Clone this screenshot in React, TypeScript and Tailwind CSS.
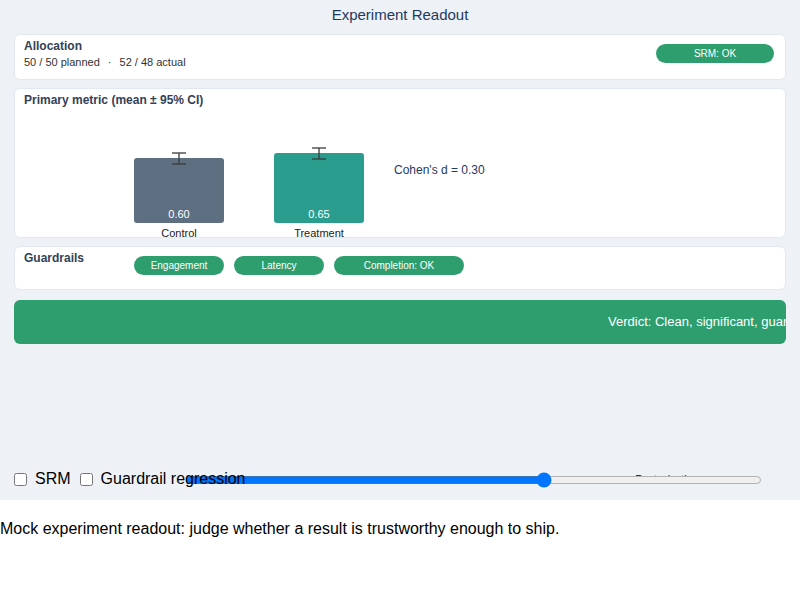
import React from "react";

const font = { fontFamily: '"Liberation Sans", Arial, Helvetica, sans-serif' };

function Pill({ children, w }: { children: React.ReactNode; w: string }) {
  return (
    <div className={`${w} h-[19px] rounded-full bg-[#2e9e6f] text-white text-[10px] flex items-center justify-center`}>
      {children}
    </div>
  );
}

function ErrorBar() {
  return (
    <svg width="16" height="13" viewBox="0 0 16 13" className="block">
      <line x1="1" y1="1" x2="15" y2="1" stroke="#3a3a3a" strokeWidth="1.3" />
      <line x1="8" y1="1" x2="8" y2="12" stroke="#3a3a3a" strokeWidth="1.3" />
      <line x1="1" y1="12" x2="15" y2="12" stroke="#3a3a3a" strokeWidth="1.3" />
    </svg>
  );
}

function Bar({ label, value, h, color }: { label: string; value: string; h: string; color: string }) {
  return (
    <div className="w-[90px] flex flex-col items-center">
      <div className="-mb-[7px] relative z-10">
        <ErrorBar />
      </div>
      <div className={`w-[90px] ${h} ${color} rounded-[3px] flex items-end justify-center pb-[2px]`}>
        <span className="text-white text-[11px] leading-[13px]">{value}</span>
      </div>
      <div className="text-[11px] leading-[13px] text-[#222] mt-[4px]">{label}</div>
    </div>
  );
}

export default function App() {
  return (
    <div style={font}>
      <div className="relative h-[500px] bg-[#eef2f6] px-[14px] pt-[6px]">
        <div className="text-center text-[15px] leading-[18px] text-[#1e3a5f]">Experiment Readout</div>

        <div className="mt-[10px] h-[46px] bg-white border border-[#e2e8f0] rounded-[6px] pl-[9px] pr-[11px] pt-[4px] flex justify-between">
          <div>
            <div className="text-[12px] leading-[15px] font-bold text-[#334155]">Allocation</div>
            <div className="text-[11px] leading-[13px] text-[#333] mt-[2px] flex">
              <span>50 / 50 planned</span>
              <span className="mx-[8px]">·</span>
              <span>52 / 48 actual</span>
            </div>
          </div>
          <div className="pt-[5px]">
            <Pill w="w-[118px]">SRM: OK</Pill>
          </div>
        </div>

        <div className="mt-[8px] h-[150px] bg-white border border-[#e2e8f0] rounded-[6px] px-[9px] pt-[4px] relative">
          <div className="text-[12px] leading-[15px] font-bold text-[#334155]">Primary metric (mean ± 95% CI)</div>
          <div className="flex items-end pl-[110px] gap-[50px] mt-[38px] h-[94px]">
            <div className="flex items-end gap-[50px]">
              <Bar label="Control" value="0.60" h="h-[65px]" color="bg-[#5f6f82]" />
              <Bar label="Treatment" value="0.65" h="h-[70px]" color="bg-[#2a9d8f]" />
            </div>
            <div className="self-start pt-[17px] -ml-[20px] text-[12px] leading-[15px] text-[#1e3a5f]">Cohen's d = 0.30</div>
          </div>
        </div>

        <div className="mt-[8px] h-[44px] bg-white border border-[#e2e8f0] rounded-[6px] px-[9px] pt-[4px] flex">
          <div className="w-[110px] text-[12px] leading-[15px] font-bold text-[#334155]">Guardrails</div>
          <div className="flex gap-[10px] pt-[5px]">
            <Pill w="w-[90px]">Engagement</Pill>
            <Pill w="w-[90px]">Latency</Pill>
            <Pill w="w-[130px]">Completion: OK</Pill>
          </div>
        </div>

        <div className="mt-[10px] h-[44px] bg-[#2e9e6f] rounded-[6px] overflow-hidden flex items-center pl-[594px] whitespace-nowrap text-white text-[13px]">
          Verdict: Clean, significant, guardrails OK — ship it.
        </div>

        <div className="absolute left-[635px] top-[471px] text-[12px] text-[#1e3a5f]">Perturbation</div>
        <input
          type="range"
          min={0}
          max={1}
          step={0.005}
          defaultValue={0.625}
          className="absolute left-[185px] top-[472px] w-[577px] h-[16px] accent-[#0075ff]"
        />
        <div className="absolute z-10 left-[10px] top-[469px] flex items-center text-[16px] text-black h-[20px]">
          <input type="checkbox" className="w-[13px] h-[13px] ml-[4px] mr-[8px]" />
          <span>SRM</span>
          <input type="checkbox" className="w-[13px] h-[13px] ml-[9px] mr-[8px]" />
          <span>Guardrail regression</span>
        </div>
      </div>
      <div className="pt-[19px] text-[16px] leading-[20px] text-black">
        Mock experiment readout: judge whether a result is trustworthy enough to ship.
      </div>
    </div>
  );
}
